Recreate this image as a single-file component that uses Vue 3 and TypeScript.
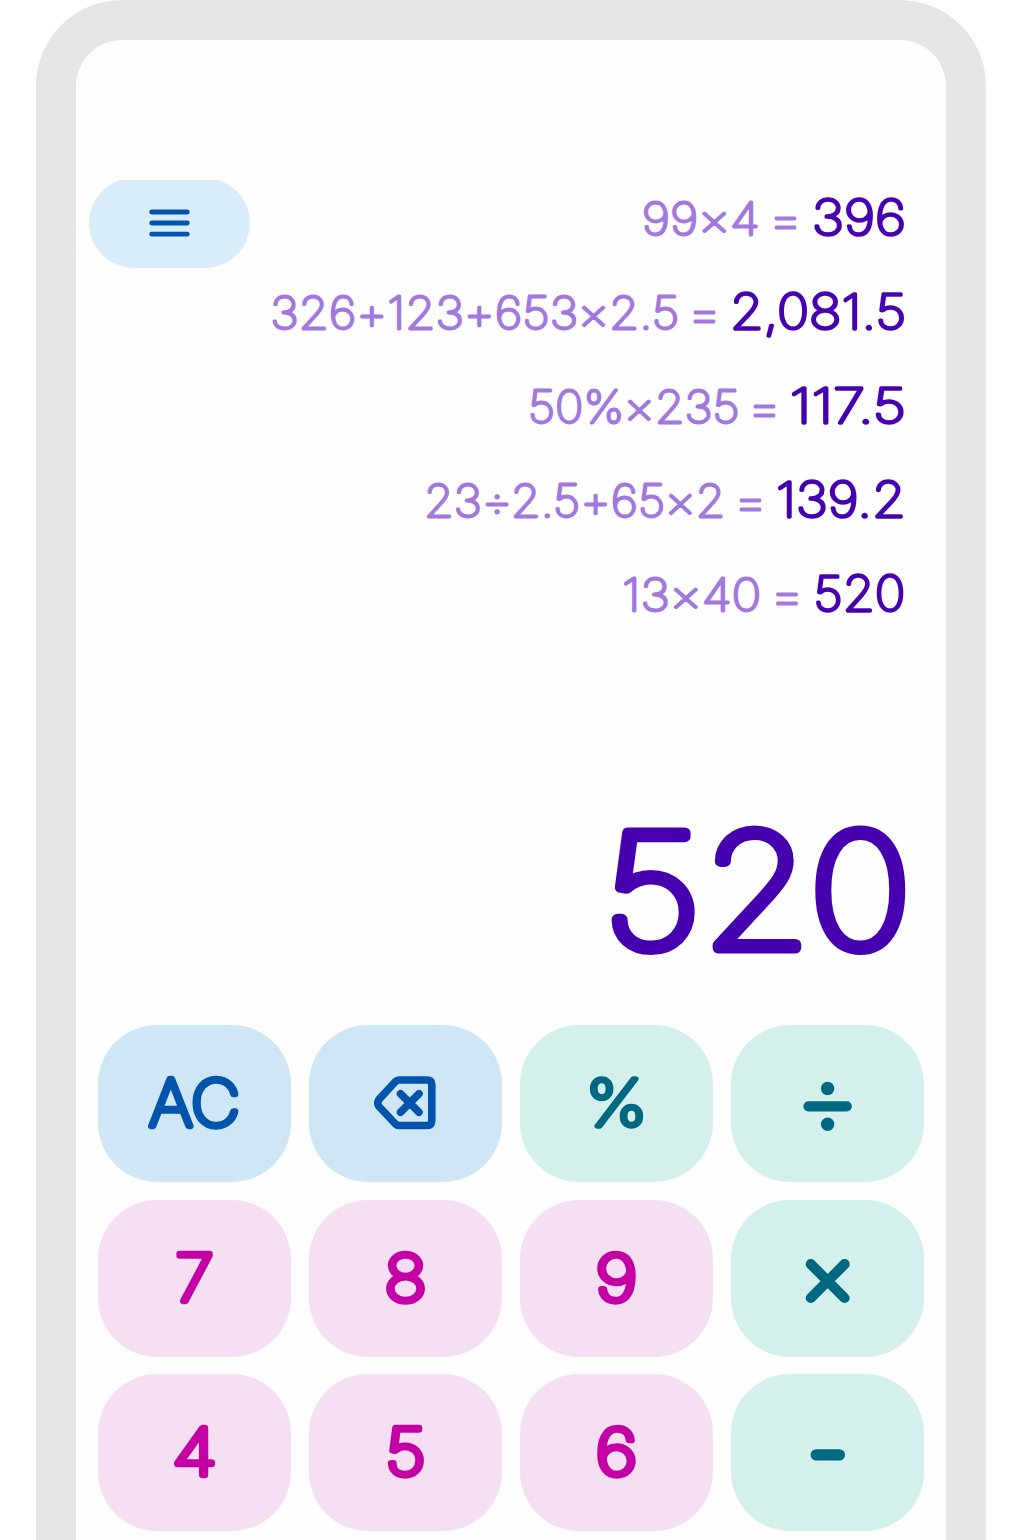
<script setup lang="ts">
interface Entry {
  expression: string
  result: string
  exprX: number
  exprW: number
  eqX: number
  resX: number
  resW: number
}

interface Key {
  id: string
  tone: 'blue' | 'teal' | 'pink'
  label?: string
  stretch?: number
}

const history: Entry[] = [
  { expression: '99×4', result: '396', exprX: 565.8, exprW: 118, eqX: 692, resX: 736, resW: 94 },
  { expression: '326+123+653×2.5', result: '2,081.5', exprX: 194.2, exprW: 409, eqX: 611, resX: 654, resW: 176 },
  { expression: '50%×235', result: '117.5', exprX: 452, exprW: 211.5, eqX: 671, resX: 713.8, resW: 116.2 },
  { expression: '23÷2.5+65×2', result: '139.2', exprX: 348, exprW: 301.5, eqX: 657, resX: 700, resW: 130 },
  { expression: '13×40', result: '520', exprX: 546, exprW: 139.3, eqX: 693.5, resX: 737.5, resW: 91.8 },
]

const keys: Key[] = [
  { id: 'clear', tone: 'blue', label: 'AC', stretch: 1.055 },
  { id: 'backspace', tone: 'blue' },
  { id: 'percent', tone: 'teal', label: '%', stretch: 1.11 },
  { id: 'divide', tone: 'teal' },
  { id: 'seven', tone: 'pink', label: '7', stretch: 1.09 },
  { id: 'eight', tone: 'pink', label: '8', stretch: 1.1 },
  { id: 'nine', tone: 'pink', label: '9', stretch: 1.16 },
  { id: 'multiply', tone: 'teal' },
  { id: 'four', tone: 'pink', label: '4', stretch: 1.17 },
  { id: 'five', tone: 'pink', label: '5', stretch: 1.11 },
  { id: 'six', tone: 'pink', label: '6', stretch: 1.16 },
  { id: 'minus', tone: 'teal' },
]
</script>

<template>
  <div class="stage">
    <main class="phone">
      <section class="screen">
        <header class="top">
          <button class="menu" aria-label="Menu">
            <svg width="41" height="28" viewBox="0 0 41 28">
              <path d="M2.7 3H38.3M2.7 14H38.3M2.7 25.2H38.3" />
            </svg>
          </button>
          <ol class="history">
            <li v-for="entry in history" :key="entry.expression">
              <svg width="870" height="94" viewBox="0 0 870 94">
                <text class="expr" :x="entry.exprX" y="54.7" :textLength="entry.exprW" lengthAdjust="spacingAndGlyphs">{{ entry.expression }}</text>
                <text class="expr eq" :x="entry.eqX" y="56.5" textLength="35" lengthAdjust="spacingAndGlyphs">=</text>
                <text class="res" :x="entry.resX" y="54.7" :textLength="entry.resW" lengthAdjust="spacingAndGlyphs">{{ entry.result }}</text>
              </svg>
            </li>
          </ol>
        </header>
        <svg class="display" width="870" height="210" viewBox="0 0 870 210">
          <text transform="scale(1.1 1)" x="479 569.5 666.2" y="161.7">520</text>
        </svg>
        <div class="pad">
          <button v-for="key in keys" :key="key.id" class="key" :class="key.tone" :aria-label="key.id">
            <svg width="193" height="157" viewBox="0 0 193 157">
              <text v-if="key.label" :class="key.id" :transform="`translate(96.5 101.3) scale(${key.stretch} 1)`">{{ key.label }}</text>
              <g v-else-if="key.id === 'backspace'" class="line back">
                <path d="M90 55H118Q122.8 55 122.8 60V95.5Q122.8 100.5 118 100.5H90Q88 100.5 86.5 99L70 81.5Q67.5 78 70 74.3L86.5 56.5Q88 55 90 55Z" />
                <path d="M91.5 68.7L110 87.2M110 68.7L91.5 87.2" />
              </g>
              <g v-else-if="key.id === 'divide'" class="line op">
                <path d="M77.5 81.3H115.8" />
                <circle cx="96.6" cy="63.5" r="6.7" />
                <circle cx="96.6" cy="99.2" r="6.7" />
              </g>
              <path v-else-if="key.id === 'multiply'" class="line op" d="M79.8 64.2L113.6 98M113.6 64.2L79.8 98" />
              <path v-else class="line minus" d="M85.3 80.9H108.3" />
            </svg>
          </button>
        </div>
      </section>
    </main>
  </div>
</template>

<style>
body {
  margin: 0;
  background: #fff;
}
</style>

<style scoped>
.stage {
  height: 1540px;
  overflow: hidden;
  display: flex;
  justify-content: center;
  align-items: flex-start;
  background: #fff;
}
.phone {
  box-sizing: border-box;
  width: 950px;
  height: 1700px;
  flex: none;
  padding: 40px;
  border-radius: 86px;
  background: #e5e5e5;
}
.screen {
  height: 1620px;
  border-radius: 46px;
  background: #fefefe;
  overflow: hidden;
}
svg {
  display: block;
}
button {
  border: 0;
  padding: 0;
  display: flex;
  align-items: center;
  justify-content: center;
}
.top {
  display: grid;
  height: 606px;
  margin-top: 140px;
  overflow: hidden;
}
.menu {
  grid-area: 1 / 1;
  justify-self: start;
  width: 161px;
  height: 90px;
  margin: -2px 0 0 13px;
  border-radius: 45px;
  background: #d9ecf9;
}
.menu path {
  fill: none;
  stroke: #0054ab;
  stroke-width: 4.8;
  stroke-linecap: round;
}
.history {
  grid-area: 1 / 1;
  list-style: none;
  margin: 0;
  padding: 0;
}
text {
  font-family: Inter, 'Open Sans', sans-serif;
  font-weight: 100;
  font-feature-settings: 'calt' 0;
  stroke-linejoin: round;
  stroke-linecap: round;
}
.expr {
  font-size: 45px;
  fill: #a278dc;
  stroke: #a278dc;
  stroke-width: 2.8;
}
.expr.eq {
  font-size: 50px;
}
.res {
  font-size: 48.3px;
  fill: #4600af;
  stroke: #4600af;
  stroke-width: 3.3;
}
.display text {
  font-size: 158.5px;
  fill: #4600af;
  stroke: #4600af;
  stroke-width: 11;
}
.pad {
  display: grid;
  grid-template-columns: repeat(4, 193px);
  gap: 17.7px 18px;
  margin: 29px 0 0 22px;
}
.key {
  width: 193px;
  height: 157px;
  border-radius: 59px;
}
.key text {
  font-size: 64px;
  stroke-width: 6.4;
  text-anchor: middle;
}
.key .percent {
  stroke-width: 5.6;
  font-size: 65px;
}
.blue {
  background: #cee6f6;
}
.teal {
  background: #d3f0ed;
}
.pink {
  background: #f5e0f3;
}
.blue text {
  fill: #0054ab;
  stroke: #0054ab;
}
.teal text {
  fill: #006880;
  stroke: #006880;
}
.pink text {
  fill: #c400a5;
  stroke: #c400a5;
}
.line {
  fill: none;
  stroke: #006880;
  stroke-linecap: round;
  stroke-linejoin: round;
}
.back {
  stroke: #0054ab;
  stroke-width: 7.6;
}
.op {
  stroke-width: 10.2;
}
.op circle {
  fill: #006880;
  stroke: none;
}
.minus {
  stroke-width: 11.4;
}
</style>
